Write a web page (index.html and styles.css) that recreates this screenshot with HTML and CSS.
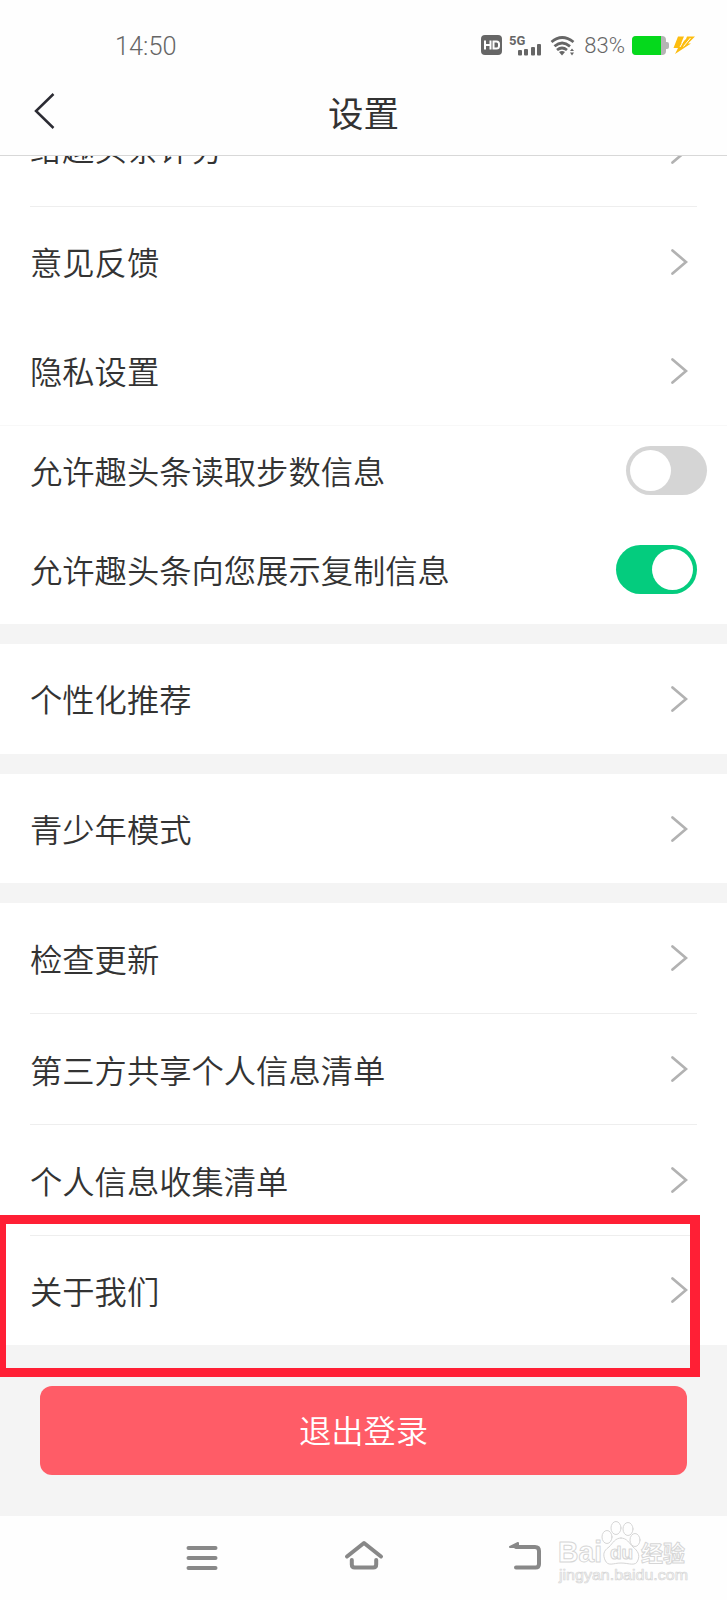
FILE: index.html
```
<!DOCTYPE html>
<html lang="zh-CN">
<head>
    <meta charset="utf-8">
    <title>设置</title>
    <link rel="stylesheet" href="styles.css">
</head>
<body>

<svg class="defs">
    <symbol id="arrow" viewBox="0 0 18 28">
        <path d="M2.5 2.5 L16 14 L2.5 25.5" fill="none" stroke="#b2b2b2" stroke-width="2.7" stroke-linecap="round"/>
    </symbol>
</svg>

<div id="main">
    <!--Status bar-->
    <div class="status">
        <span class="time">14:50</span>
        <svg class="signal" width="95" height="24" viewBox="0 0 95 24">
            <rect x="1" y="1" width="21" height="20" rx="4" fill="#666"/>
            <path d="M5 6.500v9M10.500 6.500v9M5 11h5.500M13.500 7.500h3q2.500 0 2.500 2.500v2q0 2.500-2.500 2.500h-3z" fill="none" stroke="#fff" stroke-width="2"/>
            <text x="29" y="10.500" class="net">5G</text>
            <g fill="#666">
                <rect x="38" y="16" width="4" height="5.500" rx="1"/>
                <rect x="44" y="15" width="4" height="6.500" rx="1"/>
                <rect x="51" y="13" width="4" height="8.500" rx="1"/>
                <rect x="57" y="10" width="4" height="11.500" rx="1"/>
                <path d="M79 18q3-2 6 0l-3 3.500z"/>
                <path d="M90 17l2-2.500 2 2.500zM90 18.500h4l-2 3z"/>
            </g>
            <g fill="none" stroke="#666" stroke-width="2.800">
                <path d="M71.500 8q10.500-9 22 0M74.500 12.300q7.500-6.500 15.500 0M77 16q5-4 10 0"/>
            </g>
        </svg>
        <span class="percent">83%</span>
        <svg class="power" width="64" height="20" viewBox="0 0 64 20">
            <rect x="0" y="0" width="34" height="19" rx="4" fill="#b5b5b5"/>
            <path d="M34 6h1q2 0 2 2v3q0 2-2 2h-1z" fill="#b5b5b5"/>
            <path d="M4 0h25v19h-25q-4 0-4-4v-11q0-4 4-4z" fill="#05d91c"/>
            <path d="M46 0.500h6l-3 7 5-4.500 1-2.500h8l-7 7h3l-16 10.500 3-6h-4.500z" fill="#fdbd10"/>
            <path d="M53 2l-5 9M58.500 2l-7 8.500" stroke="#fff" stroke-width="1"/>
        </svg>
    </div>

    <div class="head">
        <svg class="back" width="24" height="38" viewBox="0 0 24 38">
            <path d="M20.500 2 L3 19 L20.500 36" fill="none" stroke="#2b2b33" stroke-width="2.5"/>
        </svg>
        <h1>设置</h1>
    </div>

    <!--Setting list-->
    <div class="list">
        <div class="row cut line"><p>给趣头条评分</p><svg class="arrow"><use href="#arrow"/></svg></div>
        <div class="row"><p>意见反馈</p><svg class="arrow"><use href="#arrow"/></svg></div>
        <div class="row"><p>隐私设置</p><svg class="arrow"><use href="#arrow"/></svg></div>
        <div class="row step"><p>允许趣头条读取步数信息</p><span class="switch"></span></div>
        <div class="row copy"><p>允许趣头条向您展示复制信息</p><span class="switch on"></span></div>
    </div>
    <div class="list">
        <div class="row"><p>个性化推荐</p><svg class="arrow"><use href="#arrow"/></svg></div>
    </div>
    <div class="list">
        <div class="row"><p>青少年模式</p><svg class="arrow"><use href="#arrow"/></svg></div>
    </div>
    <div class="list last">
        <div class="row line"><p>检查更新</p><svg class="arrow"><use href="#arrow"/></svg></div>
        <div class="row line"><p>第三方共享个人信息清单</p><svg class="arrow"><use href="#arrow"/></svg></div>
        <div class="row line"><p>个人信息收集清单</p><svg class="arrow"><use href="#arrow"/></svg></div>
        <div class="row about"><p>关于我们</p><svg class="arrow"><use href="#arrow"/></svg><div class="mark"></div></div>
    </div>

    <button class="logout" type="button">退出登录</button>

    <!--System nav-->
    <div class="nav">
        <svg width="32" height="26" viewBox="0 0 32 26">
            <path d="M2.500 3h27M2.500 13h27M2.500 23h27"/>
        </svg>
        <svg width="40" height="30" viewBox="0 0 40 30">
            <path d="M3 16.500 L20 3 L37 16.500M7.800 20v4.500q0 3 3 3h18.400q3 0 3-3v-4.500"/>
        </svg>
        <svg width="34" height="30" viewBox="0 0 34 30">
            <path d="M8 7h19q4 0 4 4v13q0 3.500-3.500 3.500h-19.500"/>
            <path d="M2 7l8-4v4z" class="tip"/>
        </svg>
        <svg class="logo" width="140" height="66" viewBox="0 0 140 66">
            <text class="big" x="3" y="42" textLength="44" lengthAdjust="spacingAndGlyphs">Bai</text>
            <path d="M66 18c-6 0-8 5-12 9-6 4-6 8-4 13 3 7 8 3 16 3s15 4 17-3c2-5 0-9-5-13-4-4-6-9-12-9z"/>
            <ellipse cx="52" cy="17" rx="5" ry="6.500"/>
            <ellipse cx="61" cy="8" rx="5" ry="6.500"/>
            <ellipse cx="73" cy="9" rx="5" ry="6.500"/>
            <ellipse cx="80" cy="20" rx="5" ry="6.500"/>
            <text class="du" x="55" y="39">du</text>
            <text class="cn" x="86" y="41">经验</text>
            <text class="url" x="4" y="60" textLength="129" lengthAdjust="spacingAndGlyphs">jingyan.baidu.com</text>
        </svg>
    </div>
</div>

</body>
</html>
```
FILE: styles.css
```
*{ margin: 0; padding: 0; box-sizing: border-box; }
body{background: #fff; color: #333; font-family: "Noto Sans CJK SC", sans-serif; font-weight: 350;}
.defs{display: none;}

#main{width: 727px; height: 1600px; overflow: hidden; background: #f4f4f4;}

/*status bar*/
.status{display: flex; align-items: center; height: 78px; padding: 14px 31px 0 115px; background: #fefefe; color: #666;}
.time{padding-top: 2px; font: 300 25.3px/30px Roboto, sans-serif;}
.signal{margin-left: auto;}
.net{font: bold 13px Roboto, sans-serif; fill: #666;}
.percent{margin: 0 7px 0 9px; font: 300 22px/30px Roboto, sans-serif;}

/*title bar*/
.head{display: grid; grid-template-columns: 100px 1fr 100px; align-items: center; height: 78px; border-bottom: 1px solid #d8d8d8; background: #fefefe;}
.head .back{margin: -11px 0 0 33px;}
.head h1{padding-bottom: 10px; font-size: 35.5px; line-height: 50px; font-weight: 400; text-align: center;}

/*setting rows*/
.list{margin-bottom: 20px; background: #fff;}
.row{position: relative; display: flex; align-items: center; justify-content: space-between; height: 109px; padding: 0 39px 0 30px;}
.row p{padding-bottom: 2px; font-size: 32.3px; line-height: 46px; white-space: nowrap;}
.list:nth-of-type(4) .row{height: 110px;}
.last .line{height: 111px;}
.line:after{content: ""; position: absolute; left: 30px; right: 30px; bottom: 0; height: 1px; background: #eee;}
.arrow{width: 18px; height: 28px;}
.last .arrow{margin-bottom: 2px;}
.cut{height: 51px; align-items: flex-end; overflow: hidden;}
.cut p{margin-bottom: 35px;}
.cut .arrow{flex: none; margin-bottom: 42px;}
.step{height: 90px; padding-right: 20px; border-top: 1px solid #f8f8f8;}
.copy{height: 109px; padding-right: 30px;}

.switch{width: 81px; height: 49px; padding: 4px; border-radius: 25px; background: #d5d5d5;}
.switch:before{content: ""; display: block; width: 41px; height: 41px; border-radius: 50%; background: #fff;}
.switch.on{background: #04cc7e;}
.switch.on:before{margin-left: auto;}

/*red frame over the last row*/
.mark{position: absolute; left: 0; top: -21px; width: 700px; height: 162px; border: solid #ff1f35; border-width: 9px 10px 9px 6px; z-index: 1;}

.logout{display: block; width: 647px; height: 89px; margin: 41px 40px; padding-bottom: 4px; border: none; border-radius: 12px; background: #ff5c67; color: #fff; font: 350 32.3px/46px "Noto Sans CJK SC", sans-serif;}

/*list margin and button margin collapse*/
.last{margin-bottom: 0;}

/*system nav*/
.nav{display: flex; align-items: flex-start; height: 85px; padding: 25px 0 0 186px; background: #fefefe;}
.nav svg{flex: none; fill: none; stroke: #888; stroke-width: 4; stroke-linecap: round; stroke-linejoin: round;}
.nav svg:nth-child(1){margin: 4px 126px 0 0;}
.nav svg:nth-child(2){margin: -1px 124px 0 0;}
.nav svg:nth-child(3){margin: -1px 13px 0 0;}
.nav .tip{fill: #888; stroke-width: 2;}
.nav .logo{margin-top: -21px; stroke: #d6d6d6; stroke-width: 1;}
.logo text{fill: #fefefe;}
.big{font: bold 30px "Liberation Sans", sans-serif;}
.du{font: bold 19px "Liberation Sans", sans-serif;}
.cn{font: bold 22px "Noto Sans CJK SC", sans-serif;}
.nav .url{font: 15px "Liberation Sans", sans-serif; stroke-width: .7;}
```
